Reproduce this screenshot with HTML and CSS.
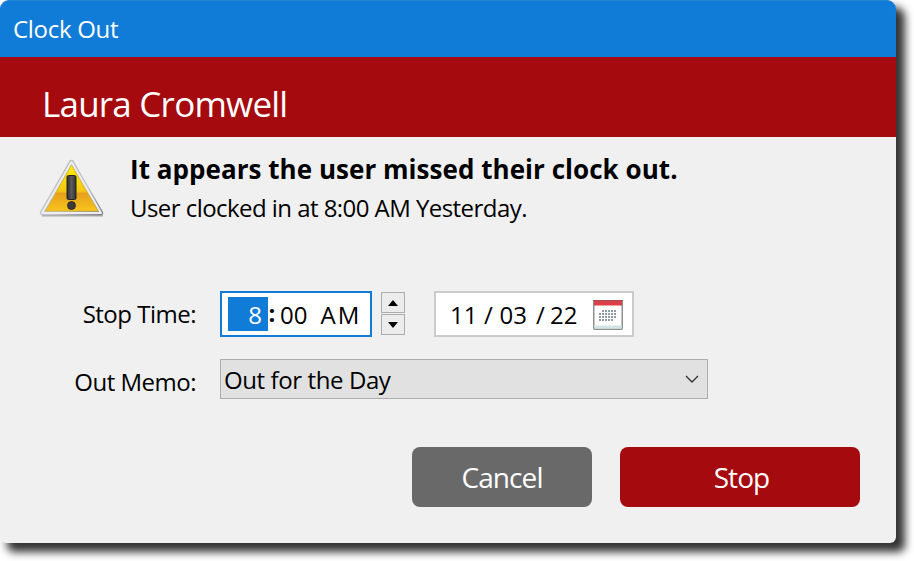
FILE: index.html
```html
<!DOCTYPE html>
<html lang="en">
<head>
    <meta charset="UTF-8">
    <meta name="viewport" content="width=device-width, initial-scale=1.0">
    <title>Clock Out</title>
    <link rel="stylesheet" href="styles.css">
</head>
<body>

    <div class="dialog">
        <div class="title-bar"><span>Clock Out</span></div>

        <header class="user-header">
            <h1>Laura Cromwell</h1>
        </header>

        <div class="message">
            <svg class="warning-icon" width="66" height="62" viewBox="0 0 66 62">
                <defs>
                    <linearGradient id="rim" x1="0" y1="0" x2="1" y2="1">
                        <stop offset="0" stop-color="#b4b4b4"/>
                        <stop offset="0.6" stop-color="#c4c6c9"/>
                        <stop offset="1" stop-color="#858585"/>
                    </linearGradient>
                    <linearGradient id="yellow" x1="0" y1="0" x2="0" y2="1">
                        <stop offset="0" stop-color="#fff200"/>
                        <stop offset="0.57" stop-color="#f5c614"/>
                        <stop offset="0.62" stop-color="#e5a01c"/>
                        <stop offset="1" stop-color="#f9c41c"/>
                    </linearGradient>
                    <linearGradient id="mark" x1="0" y1="0" x2="1" y2="0">
                        <stop offset="0" stop-color="#2c2c2c"/>
                        <stop offset="0.5" stop-color="#5c5c5c"/>
                        <stop offset="1" stop-color="#303030"/>
                    </linearGradient>
                </defs>
                <path d="M3 57.500H64" stroke="#aaa" stroke-width="2"/>
                <path d="M32.500 4L62 55H3Z" fill="#e3e5e8" stroke="url(#rim)" stroke-width="4.500" stroke-linejoin="round"/>
                <path d="M32.500 4L62 55H3Z" fill="none" stroke="#eceef2" stroke-width="2" stroke-linejoin="round"/>
                <path d="M32.500 7L59 53H6.500Z" fill="url(#yellow)" stroke="#d6b13a" stroke-width="0.800"/>
                <rect x="28" y="17.500" width="9" height="24" rx="1.500" fill="url(#mark)" stroke="#222"/>
                <circle cx="32.500" cy="47.500" r="4" fill="#3b3b3b" stroke="#222" stroke-width="0.800"/>
            </svg>
            <div class="message-text">
                <h2><span>It appears the user missed their clock out.</span></h2>
                <p><span>User clocked in at 8:00 AM Yesterday.</span></p>
            </div>
        </div>

        <div class="form">
            <div class="row time-row">
                <label class="stop-label"><span>Stop Time:</span></label>
                <div class="time-input">
                    <span class="hour">8</span>
                    <span class="colon">:</span>
                    <span class="minute">00</span>
                    <span class="period">AM</span>
                </div>
                <div class="spinner">
                    <button><svg width="10" height="6" viewBox="0 0 10 6"><path d="M0 6L5 0L10 6Z"/></svg></button>
                    <button><svg width="10" height="6" viewBox="0 0 10 6"><path d="M0 0H10L5 6Z"/></svg></button>
                </div>
                <div class="date-input">
                    <span class="month">11</span>
                    <span class="slash">/</span>
                    <span class="day">03</span>
                    <span class="slash second">/</span>
                    <span class="year">22</span>
                    <svg class="calendar-icon" width="30" height="31" viewBox="0 0 30 31">
                        <rect x="0.750" y="1.750" width="28.500" height="28.500" rx="1" fill="#fff" stroke="#909090" stroke-width="1.500"/>
                        <path d="M1.500 28H28.500" stroke="#d3e4e5" stroke-width="3"/>
                        <path d="M1 4H29" stroke="#db4049" stroke-width="5"/>
                        <path d="M0 1.500H30" stroke="#a94a4f"/>
                        <g fill="none" stroke="#8f9ca8" stroke-width="2" stroke-dasharray="2 1">
                            <path d="M9 12H24"/>
                            <path d="M6 15H24"/>
                            <path d="M6 18H24"/>
                            <path d="M6 21H21"/>
                        </g>
                    </svg>
                </div>
            </div>

            <div class="row memo-row">
                <label class="memo-label"><span>Out Memo:</span></label>
                <div class="memo-select">
                    <span>Out for the Day</span>
                    <svg width="14" height="8" viewBox="0 0 14 8"><path d="M1 1L7 7L13 1" fill="none" stroke="#333" stroke-width="1.400"/></svg>
                </div>
            </div>
        </div>

        <div class="buttons">
            <button class="cancel"><span>Cancel</span></button>
            <button class="stop"><span>Stop</span></button>
        </div>
    </div>

</body>
</html>
```
FILE: styles.css
```css
* {
    box-sizing: border-box;
}

body {
    margin: 0;
    min-height: 561px;
    background-color: #fff;
    font-family: "Open Sans", sans-serif;
    font-size: 24px;
    color: #000;
}

h1, h2, p {
    margin: 0;
    white-space: nowrap;
}

button {
    font-family: inherit;
    padding: 0;
    border: none;
}

.dialog {
    width: 896px;
    height: 543px;
    background-color: #f0f0f0;
    border-radius: 9px 9px 6px 6px;
    box-shadow: 8px 8px 9px 1px rgba(0, 0, 0, 0.8);
}

.title-bar {
    height: 57px;
    padding-left: 13px;
    background-color: #107cd7;
    border-top: 1px solid #2585d0;
    border-radius: 9px 9px 0 0;
    color: #fff;
    line-height: 56px;
    letter-spacing: -0.3px;
}

.user-header {
    height: 80px;
    padding: 12px 0 0 42px;
    background-color: #a50a0e;
    color: #fff;
}

.user-header h1 {
    font-size: 35px;
    font-weight: normal;
    line-height: 70px;
    letter-spacing: -0.78px;
}

.message {
    display: flex;
    height: 154px;
    padding: 14px 0 0 39px;
}

.warning-icon {
    margin-top: 7px;
}

.message-text {
    padding-left: 25px;
}

.message-text h2 {
    font-size: 26px;
    font-weight: bold;
    line-height: 36px;
    letter-spacing: 0.04px;
}

.message-text p {
    line-height: 42px;
    letter-spacing: -0.55px;
}

.row {
    display: flex;
}

.row label {
    width: 196px;
    text-align: right;
    white-space: nowrap;
    letter-spacing: -0.5px;
}

.time-row {
    height: 46px;
    line-height: 46px;
}

.time-input {
    display: flex;
    align-items: center;
    width: 152px;
    height: 46px;
    margin-left: 24px;
    padding-left: 6px;
    background-color: #fff;
    border: 2px solid #107cd7;
}

.hour {
    width: 40px;
    height: 34px;
    padding-right: 6px;
    background-color: #107cd7;
    color: #fff;
    line-height: 35px;
    text-align: right;
}

.colon {
    width: 8px;
    margin-right: 4px;
    padding-bottom: 3px;
    font-weight: bold;
    text-align: center;
}

.minute, .period, .date-input span {
    padding-top: 1px;
}

.period {
    margin-left: 13px;
    letter-spacing: 2px;
}

.spinner {
    display: flex;
    flex-direction: column;
    gap: 1px;
    margin: 1px 0 0 9px;
}

.spinner button {
    display: flex;
    align-items: center;
    justify-content: center;
    width: 24px;
    height: 21px;
    background-color: #ececec;
    border: 1px solid #adadad;
}

.date-input {
    display: flex;
    align-items: center;
    width: 200px;
    margin-left: 29px;
    padding-left: 14px;
    background-color: #fff;
    border: 2px solid #cbcbcb;
}

.slash {
    width: 22px;
    text-align: center;
}

.slash.second {
    width: 23px;
    padding-left: 4px;
}

.calendar-icon {
    margin-left: 16px;
}

.memo-row {
    margin-top: 22px;
    height: 40px;
}

.memo-label {
    line-height: 46px;
}

.memo-select {
    display: flex;
    align-items: center;
    justify-content: space-between;
    width: 488px;
    margin-left: 24px;
    padding: 0 8px 0 3px;
    background-color: #e1e1e1;
    border: 1px solid #adadad;
    letter-spacing: -0.4px;
}

.buttons {
    display: flex;
    justify-content: flex-end;
    gap: 28px;
    padding: 48px 36px 0 0;
}

.buttons button {
    height: 60px;
    border-radius: 8px;
    color: #fff;
    font-size: 28px;
    line-height: 60px;
    letter-spacing: -0.9px;
}

.cancel {
    width: 180px;
    background-color: #696969;
}

.buttons .stop {
    width: 240px;
    padding-left: 3px;
    background-color: #a50a0e;
}
```
